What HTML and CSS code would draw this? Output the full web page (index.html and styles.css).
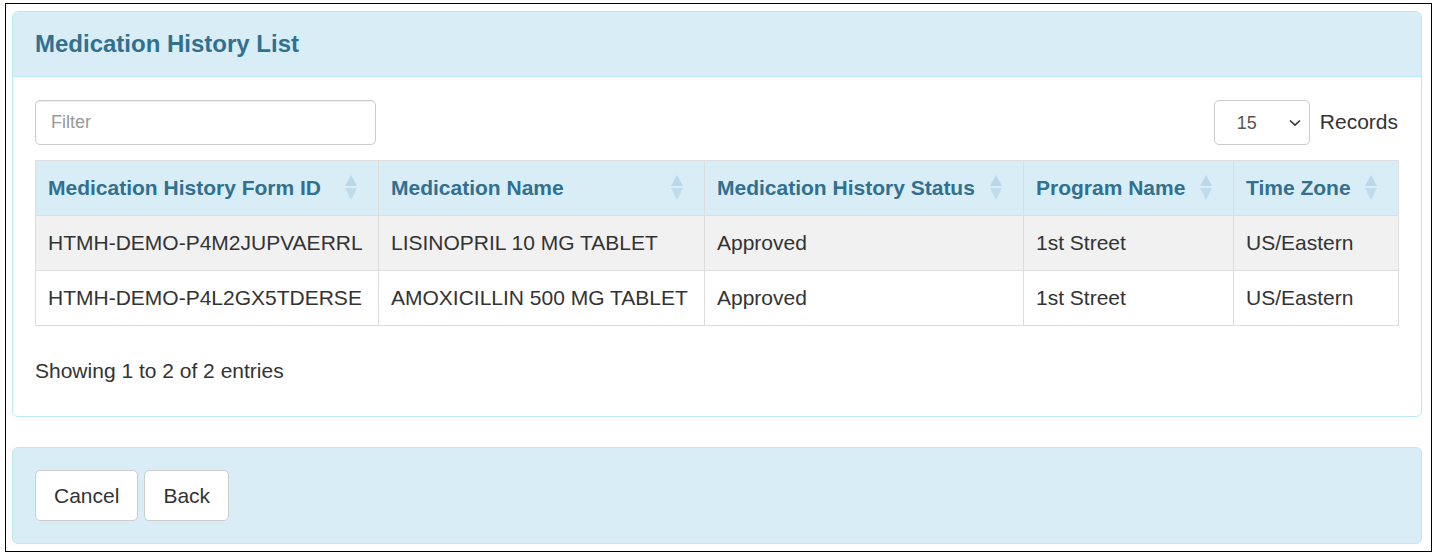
FILE: index.html
```html
<!DOCTYPE html>
<html>
<head>
<meta charset="utf-8">
<link rel="stylesheet" href="styles.css">
</head>
<body>
<div class="frame">
  <div class="panel">
    <div class="panel-heading"><h3 class="panel-title">Medication History List</h3></div>
    <div class="panel-body">
      <div class="toolbar">
        <input class="filter" type="text" placeholder="Filter">
        <div class="length">
          <div class="select"><span>15</span>
            <svg class="chev" width="12" height="8" viewBox="0 0 12 8"><path d="M1 1.5 L6 6.2 L11 1.5" fill="none" stroke="#333" stroke-width="1.6"/></svg>
          </div>
          <span class="records">Records</span>
        </div>
      </div>
      <table class="grid">
        <colgroup>
          <col class="c1"><col class="c2"><col class="c3"><col class="c4"><col class="c5">
        </colgroup>
        <thead>
          <tr>
            <th><span>Medication History Form ID</span><i class="sort"></i></th>
            <th><span>Medication Name</span><i class="sort"></i></th>
            <th><span>Medication History Status</span><i class="sort"></i></th>
            <th><span>Program Name</span><i class="sort"></i></th>
            <th><span>Time Zone</span><i class="sort"></i></th>
          </tr>
        </thead>
        <tbody>
          <tr class="odd">
            <td>HTMH-DEMO-P4M2JUPVAERRL</td>
            <td>LISINOPRIL 10 MG TABLET</td>
            <td>Approved</td>
            <td>1st Street</td>
            <td>US/Eastern</td>
          </tr>
          <tr>
            <td>HTMH-DEMO-P4L2GX5TDERSE</td>
            <td>AMOXICILLIN 500 MG TABLET</td>
            <td>Approved</td>
            <td>1st Street</td>
            <td>US/Eastern</td>
          </tr>
        </tbody>
      </table>
      <div class="info">Showing 1 to 2 of 2 entries</div>
    </div>
  </div>
  <div class="footer">
    <button class="btn">Cancel</button>
    <button class="btn">Back</button>
  </div>
</div>
</body>
</html>
```
FILE: styles.css
```css
* { box-sizing: border-box; }
html, body { margin: 0; padding: 0; background: #fff; }
body {
  font-family: "Liberation Sans", Arial, sans-serif;
  font-size: 21px;
  line-height: 30px;
  color: #333;
}
.frame {
  margin: 3px 5px 0 5px;
  height: 549px;
  border: 1px solid #000;
  padding: 7px 9px 0 6px;
}
.panel {
  border: 1px solid #bce8f1;
  border-radius: 6px;
  background: #fff;
}
.panel-heading {
  background: #d9edf7;
  border-bottom: 1px solid #bce8f1;
  border-radius: 5px 5px 0 0;
  height: 65px;
  padding: 0 22px 2px 22px;
  display: flex;
  align-items: center;
}
.panel-title {
  margin: 0;
  font-size: 24px;
  font-weight: bold;
  color: #31708f;
  line-height: 27px;
}
.panel-body {
  padding: 23px 23px 30px 22px;
}
.toolbar {
  display: flex;
  justify-content: space-between;
  align-items: center;
  height: 45px;
}
.filter {
  width: 341px;
  height: 45px;
  border: 1px solid #ccc;
  border-radius: 5px;
  padding: 0 15px;
  font-family: "Liberation Sans", Arial, sans-serif;
  font-size: 18px;
  color: #555;
  box-shadow: inset 0 1px 1px rgba(0,0,0,0.075);
  outline: none;
}
.filter::placeholder { color: #999; }
.length {
  display: flex;
  align-items: center;
  gap: 10px;
}
.select {
  width: 96px;
  height: 45px;
  border: 1px solid #ccc;
  border-radius: 5px;
  display: flex;
  align-items: center;
  justify-content: space-between;
  padding: 0 8px 0 22px;
  font-size: 18px;
  color: #555;
}
.chev { display: block; }
.records { font-size: 21px; padding-bottom: 2px; }
.grid {
  margin-top: 15px;
  width: 1363px;
  border-collapse: collapse;
  table-layout: fixed;
}
.c1 { width: 343px; }
.c2 { width: 326px; }
.c3 { width: 319px; }
.c4 { width: 210px; }
.c5 { width: 165px; }
.grid th, .grid td {
  border: 1px solid #ddd;
  padding: 12px 12px;
  height: 55px;
  text-align: left;
  white-space: nowrap;
  vertical-align: middle;
}
.grid th {
  background: #d9edf7;
  color: #31708f;
  font-weight: bold;
  position: relative;
  padding-right: 40px;
}
.sort {
  position: absolute;
  right: 21px;
  top: 14px;
  width: 12px;
  height: 26px;
}
.sort::before, .sort::after {
  content: "";
  position: absolute;
  left: 0;
  border-left: 6px solid transparent;
  border-right: 6px solid transparent;
}
.sort::before {
  top: 0;
  border-bottom: 11px solid #b9d9ea;
}
.sort::after {
  top: 13px;
  border-top: 12px solid #bfdcec;
}
.grid tbody tr.odd td { background: #f1f1f1; }
.grid td { color: #333; }
.info {
  padding-top: 30px;
  line-height: 30px;
}
.footer {
  margin-top: 30px;
  background: #d9edf7;
  border: 1px solid #bce8f1;
  border-radius: 6px;
  padding: 22px 22px 22px 22px;
  display: flex;
  gap: 6px;
}
.btn {
  height: 51px;
  padding: 0 18px;
  background: #fff;
  border: 1px solid #ccc;
  border-radius: 5px;
  font-family: "Liberation Sans", Arial, sans-serif;
  font-size: 21px;
  color: #333;
}
```
